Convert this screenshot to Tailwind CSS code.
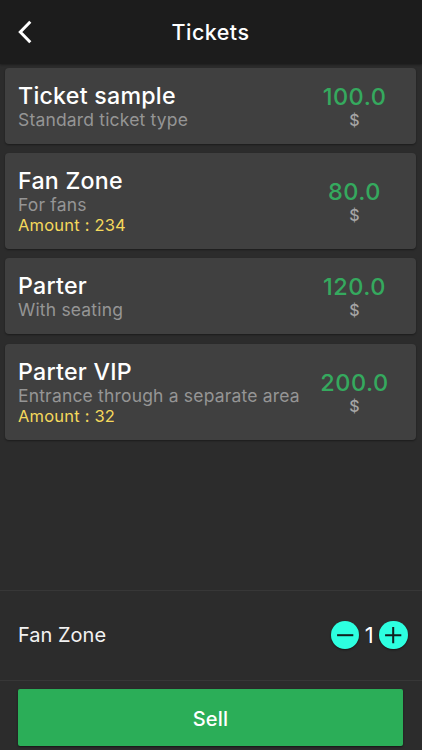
<!DOCTYPE html>
<html lang="en">
<head>
<meta charset="utf-8">
<title>Tickets</title>
<script src="https://cdn.jsdelivr.net/npm/@tailwindcss/browser@4"></script>
</head>
<body class="flex h-[750px] w-[422px] flex-col overflow-hidden bg-[#2c2c2c] font-['Inter','Liberation_Sans',sans-serif] text-white">
  <header class="grid h-16 shrink-0 grid-cols-[1fr_auto_1fr] items-center bg-[#1c1c1c] pl-[17px] shadow-[0_1px_2px_rgba(0,0,0,0.35)]">
    <button aria-label="Back" class="w-4">
      <svg class="block h-6 w-4" viewBox="0 0 16 24" fill="none" stroke="#fff" stroke-width="3"><path d="M13.3 1.8 3.3 12 13.3 22.2"/></svg>
    </button>
    <h1 class="mr-[18px] text-[21.5px] leading-7 font-medium tracking-[0.45px]">Tickets</h1>
  </header>

  <main class="flex grow flex-col gap-[9.2px] pt-1 pr-1.5 pl-[5px]">
    <article class="flex items-center justify-between rounded-[4px] bg-[#404040] py-3.5 pr-3 pl-[13px] shadow-[0_1px_2px_rgba(0,0,0,0.4)]">
      <div><h2 class="text-[23.2px] leading-7 font-medium tracking-[0.25px]">Ticket sample</h2><p class="text-[17.5px] leading-5 tracking-[0.18px] text-[#959595]">Standard ticket type</p></div>
      <div class="w-[99px] text-center"><p class="text-[23.5px] leading-7 font-medium tracking-[0.5px] text-[#35a95e]">100.0</p><p class="text-[16px] leading-[18px] font-medium text-[#a5a5a5]">$</p></div>
    </article>
    <article class="flex items-center justify-between rounded-[4px] bg-[#404040] py-3.5 pr-3 pl-[13px] shadow-[0_1px_2px_rgba(0,0,0,0.4)]">
      <div><h2 class="text-[23.2px] leading-7 font-medium tracking-[0.25px]">Fan Zone</h2><p class="text-[17.5px] leading-5 tracking-[0.18px] text-[#959595]">For fans</p><p class="text-[16.5px] leading-5 tracking-[0.2px] text-[#f5d95c]">Amount : 234</p></div>
      <div class="w-[99px] text-center"><p class="text-[23.5px] leading-7 font-medium tracking-[0.5px] text-[#35a95e]">80.0</p><p class="text-[16px] leading-[18px] font-medium text-[#a5a5a5]">$</p></div>
    </article>
    <article class="flex items-center justify-between rounded-[4px] bg-[#404040] py-3.5 pr-3 pl-[13px] shadow-[0_1px_2px_rgba(0,0,0,0.4)]">
      <div><h2 class="text-[23.2px] leading-7 font-medium tracking-[0.25px]">Parter</h2><p class="text-[17.5px] leading-5 tracking-[0.18px] text-[#959595]">With seating</p></div>
      <div class="w-[99px] text-center"><p class="text-[23.5px] leading-7 font-medium tracking-[0.5px] text-[#35a95e]">120.0</p><p class="text-[16px] leading-[18px] font-medium text-[#a5a5a5]">$</p></div>
    </article>
    <article class="flex items-center justify-between rounded-[4px] bg-[#404040] py-3.5 pr-3 pl-[13px] shadow-[0_1px_2px_rgba(0,0,0,0.4)]">
      <div><h2 class="text-[23.2px] leading-7 font-medium tracking-[0.25px]">Parter VIP</h2><p class="text-[17.5px] leading-5 tracking-[0.18px] whitespace-nowrap text-[#959595]">Entrance through a separate area</p><p class="text-[16.5px] leading-5 tracking-[0.2px] text-[#f5d95c]">Amount : 32</p></div>
      <div class="w-[99px] text-center"><p class="text-[23.5px] leading-7 font-medium tracking-[0.5px] text-[#35a95e]">200.0</p><p class="text-[16px] leading-[18px] font-medium text-[#a5a5a5]">$</p></div>
    </article>
  </main>

  <section class="flex h-[91px] shrink-0 items-center justify-between border-y border-[#373737] pr-[14.5px] pb-px pl-[18px]">
    <p class="text-[20px] leading-6 text-[#f2f2f2]">Fan Zone</p>
    <div class="flex items-center">
      <button aria-label="Remove" class="rounded-full bg-[#2dffe0] shadow-[0_1px_2px_rgba(0,0,0,0.5)]"><svg class="block size-[28.4px]" viewBox="0 0 28 28" stroke="#10201e" stroke-width="2"><path d="M6 14H22"/></svg></button>
      <span class="w-5 text-center text-[22px] leading-7">1</span>
      <button aria-label="Add" class="rounded-full bg-[#2dffe0] shadow-[0_1px_2px_rgba(0,0,0,0.5)]"><svg class="block size-[28.4px]" viewBox="0 0 28 28" stroke="#10201e" stroke-width="2"><path d="M6 14H22M14 6V22"/></svg></button>
    </div>
  </section>
  <footer class="h-[69px] shrink-0 pt-2 pr-[19px] pl-[18px]">
    <button class="block h-[57px] w-full rounded-[2px] bg-[#2bae58] pt-0.5 text-[20px] font-medium tracking-[0.2px] shadow-[0_1px_2px_rgba(0,0,0,0.5)]">Sell</button>
  </footer>
</body>
</html>
